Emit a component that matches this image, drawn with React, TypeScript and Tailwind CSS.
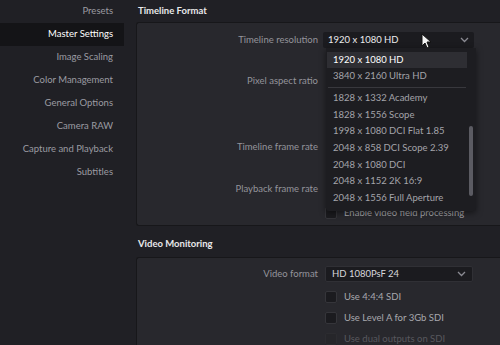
const font = { fontFamily: 'Lato, "Open Sans", sans-serif' };

const sidebarItems = [
  "Presets",
  "Master Settings",
  "Image Scaling",
  "Color Management",
  "General Options",
  "Camera RAW",
  "Capture and Playback",
  "Subtitles",
];

const resolutions = [
  "1828 x 1332 Academy",
  "1828 x 1556 Scope",
  "1998 x 1080 DCI Flat 1.85",
  "2048 x 858 DCI Scope 2.39",
  "2048 x 1080 DCI",
  "2048 x 1152 2K 16:9",
  "2048 x 1556 Full Aperture",
];

const Chevron = () => (
  <svg width="9" height="6" viewBox="0 0 9 6" className="text-[#8a8a92]">
    <path d="M1 1l3.5 3.5L8 1" fill="none" stroke="currentColor" strokeWidth="1.3" />
  </svg>
);

const Label = ({ text }: { text: string }) => (
  <div className="w-[186px] pr-[5px] text-right text-[9.5px] text-[#94949b] shrink-0">{text}</div>
);

const Checkbox = ({ text, dim }: { text: string; dim?: boolean }) => (
  <div className="flex items-center h-[12px] pl-[188px]">
    <div className={"w-[12px] h-[12px] rounded-[2px] border " + (dim ? "bg-[#26262a] border-[#2c2c30]" : "bg-[#1b1b1f] border-[#35353a]")} />
    <span className={"ml-[7px] text-[9.5px] " + (dim ? "text-[#58585e]" : "text-[#a8a8ae]")}>{text}</span>
  </div>
);

const App = () => {
  return (
    <div style={font} className="w-[500px] h-[345px] flex overflow-hidden bg-[#202025] relative">
      {/* sidebar */}
      <div className="w-[124px] shrink-0 flex flex-col">
        {sidebarItems.map((item) => (
          <div
            key={item}
            className={
              "h-[23px] flex items-center justify-end pr-[11px] text-[9.5px] " +
              (item === "Master Settings" ? "bg-[#141417] text-white" : "text-[#9b9ba2]")
            }
          >
            {item}
          </div>
        ))}
      </div>

      {/* main */}
      <div className="flex-1 flex flex-col pl-[12px]">
        <div className="h-[22px] flex items-center pl-[2px] text-[9.5px] font-bold text-[#e8e8ea]">Timeline Format</div>
        <div className="h-[204px] bg-[#28282d] border border-[#17171a] border-r-0 rounded-tl-[3px] rounded-bl-[3px] flex flex-col pt-[9px]">
          <div className="flex items-center h-[16px]">
            <Label text="Timeline resolution" />
            <div className="w-[151px] h-[16px] bg-[#1b1b1f] rounded-[2px] flex items-center justify-between px-[5px] text-[9.5px] text-[#ececee]">
              <span>1920 x 1080 HD</span>
              <Chevron />
            </div>
          </div>
          <div className="flex items-center h-[16px] mt-[25px]">
            <Label text="Pixel aspect ratio" />
          </div>
          <div className="flex items-center h-[16px] mt-[50px]">
            <Label text="Timeline frame rate" />
          </div>
          <div className="flex items-center h-[16px] mt-[26px]">
            <Label text="Playback frame rate" />
          </div>
          <div className="mt-[10px]">
            <Checkbox text="Enable video field processing" />
          </div>
        </div>

        <div className="h-[31px] flex items-end pb-[6px] pl-[2px] text-[9.5px] font-bold text-[#e8e8ea]">Video Monitoring</div>
        <div className="flex-1 bg-[#28282d] border border-[#17171a] border-r-0 border-b-0 rounded-tl-[3px] flex flex-col pt-[8px] gap-[9px]">
          <div className="flex items-center h-[16px]">
            <Label text="Video format" />
            <div className="ml-[2px] w-[148px] h-[16px] bg-[#1b1b1f] rounded-[2px] border border-[#303035] flex items-center justify-between px-[6px] text-[9.5px] text-[#d8d8dc]">
              <span>HD 1080PsF 24</span>
              <Chevron />
            </div>
          </div>
          <Checkbox text="Use 4:4:4 SDI" />
          <Checkbox text="Use Level A for 3Gb SDI" />
          <Checkbox text="Use dual outputs on SDI" dim />
        </div>
      </div>

      {/* open dropdown menu */}
      <div className="absolute left-[326px] top-[48px] w-[150px] h-[163px] bg-[#1d1d21] rounded-b-[3px] shadow-[0_2px_6px_rgba(0,0,0,0.5)] pt-[4px] pl-[1px] pr-[9px] text-[9.5px]">
        <div className="h-[16px] flex items-center pl-[6px] bg-[#2e2e33] text-white">1920 x 1080 HD</div>
        <div className="h-[17px] flex items-center pl-[6px] text-[#a4a4aa]">3840 x 2160 Ultra HD</div>
        <div className="h-px bg-[#38383d] mx-[1px] my-[2px]" />
        {resolutions.map((r) => (
          <div key={r} className="h-[16.6px] flex items-center pl-[6px] text-[#a4a4aa]">{r}</div>
        ))}
        <div className="absolute right-[3px] top-[78px] w-[4px] h-[70px] rounded-full bg-[#5b5b62]" />
      </div>

      {/* mouse cursor */}
      <svg className="absolute left-[421px] top-[33px]" width="11" height="16" viewBox="0 0 11 16">
        <path d="M1 1v12l3-3 2 5 2-1-2-5h4z" fill="#f4f4f4" stroke="#111" strokeWidth="1" strokeLinejoin="round" />
      </svg>
    </div>
  );
};

export default App;
